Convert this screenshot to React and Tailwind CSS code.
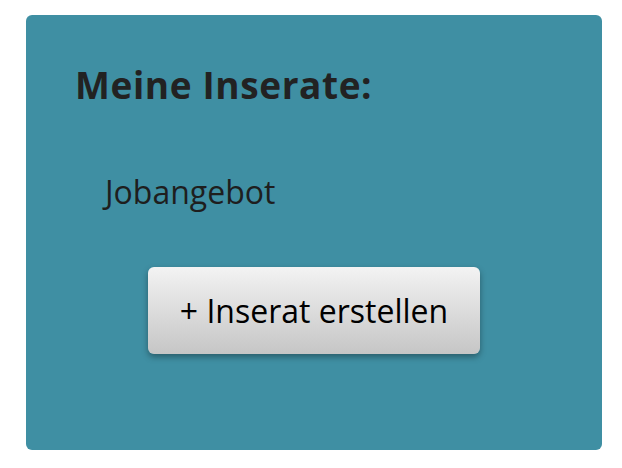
export default function App() {
  return (
    <div className="w-[622px] h-[468px] bg-white pt-[15px] pl-[26px]" style={{ fontFamily: '"Open Sans", sans-serif' }}>
      <div className="w-[576px] h-[435px] bg-[#3f8fa3] rounded-[6px] pt-[52px] pl-[49px]">
        <h2 className="text-[37px] leading-[36px] font-bold tracking-[0.6px] text-[#222]">Meine Inserate:</h2>
        <div className="mt-[73px] pl-[30px] text-[32px] leading-[32px] text-[#1e1e1e]">Jobangebot</div>
        <button className="mt-[59px] ml-[73px] w-[332px] h-[87px] rounded-[6px] bg-gradient-to-b from-[#f3f3f3] to-[#c6c6c6] shadow-[0_3px_6px_rgba(0,0,0,0.35)] text-[32px] text-black flex items-center justify-center">
          + Inserat erstellen
        </button>
      </div>
    </div>
  );
}
